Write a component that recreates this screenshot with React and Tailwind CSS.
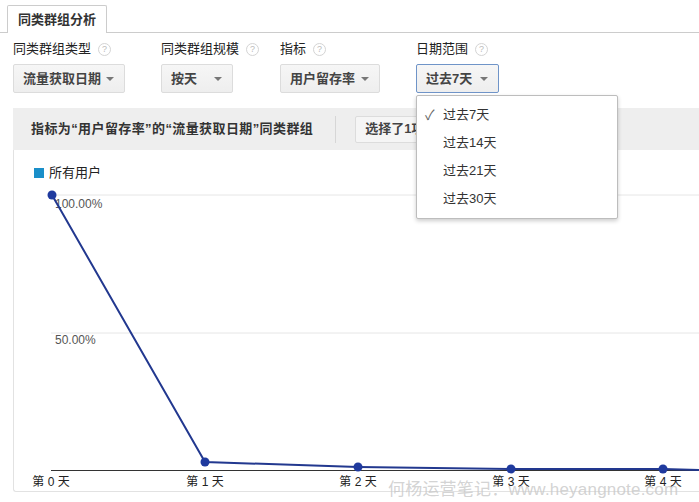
import React from "react";

const cjk = { fontFamily: '"Liberation Sans", "Noto Sans CJK SC", sans-serif' };

function Help() {
  return (
    <span className="ml-[7px] inline-flex h-[13px] w-[13px] items-center justify-center rounded-full border border-[#d4d4d4] text-[9px] leading-none text-[#bbb]">
      ?
    </span>
  );
}

function Caret() {
  return <span className="ml-auto h-0 w-0 border-x-[4px] border-t-[4px] border-x-transparent border-t-[#777]" />;
}

function Picker({ label, value, width, active }) {
  return (
    <div className="flex flex-col">
      <div className="flex h-[18px] items-center text-[13px] text-[#222]">
        {label}
        <Help />
      </div>
      <div
        className={`mt-[6px] flex h-[29px] items-center rounded-[2px] border bg-gradient-to-b from-[#f6f6f6] to-[#eeeeee] pl-[9px] pr-[10px] text-[13px] font-bold text-[#444] ${
          active ? "border-[#6f94c8]" : "border-[#dcdcdc]"
        }`}
        style={{ width }}
      >
        {value}
        <Caret />
      </div>
    </div>
  );
}

const points = [
  [38, 9],
  [191, 276],
  [344, 281],
  [497, 283],
  [649, 283],
];

const ticks = [
  [37, "第 0 天"],
  [191, "第 1 天"],
  [344, "第 2 天"],
  [497, "第 3 天"],
  [649, "第 4 天"],
];

export default function App() {
  return (
    <div className="relative h-[502px] w-[699px] overflow-hidden bg-white" style={cjk}>
      {/* tab strip */}
      <div className="flex border-b border-[#cccccc] pl-[7px] pt-[5px]">
        <div className="-mb-px flex h-[28px] items-center rounded-t-[2px] border border-b-0 border-[#cccccc] bg-white px-[10px] text-[13px] font-bold text-[#333]">
          同类群组分析
        </div>
      </div>

      {/* pickers */}
      <div className="flex pl-[13px] pt-[7px]">
        <div className="w-[148px]">
          <Picker label="同类群组类型" value="流量获取日期" width={112} />
        </div>
        <div className="w-[119px]">
          <Picker label="同类群组规模" value="按天" width={72} />
        </div>
        <div className="w-[136px]">
          <Picker label="指标" value="用户留存率" width={100} />
        </div>
        <div>
          <Picker label="日期范围" value="过去7天" width={83} active />
        </div>
      </div>

      {/* title bar */}
      <div className="ml-[13px] mt-[15px] flex h-[42px] items-center bg-[#eeeeee] pl-[18px]">
        <span className="text-[13px] font-bold tracking-[0.4px] text-[#333]">指标为“用户留存率”的“流量获取日期”同类群组</span>
        <span className="ml-[22px] h-[27px] w-px bg-[#d6d6d6]" />
        <div className="ml-[19px] flex h-[27px] items-center rounded-[2px] border border-[#dcdcdc] bg-[#f5f5f5] px-[9px] text-[13px] font-bold text-[#444]">
          选择了1项
        </div>
      </div>

      {/* chart panel */}
      <div className="ml-[13px] h-[342px] rounded-bl-[3px] border-b border-l border-[#e2e2e2]">
        <div className="flex h-[36px] items-center pl-[20px] pt-[10px] text-[13px] text-[#222]">
          <span className="mr-[5px] h-[10px] w-[10px] bg-[#1a8fc9]" />
          所有用户
        </div>
        <svg width="686" height="305" className="block" style={{ fontFamily: '"Liberation Sans", "Noto Sans CJK SC", sans-serif' }}>
          <line x1="37" y1="9" x2="686" y2="9" stroke="#e6e6e6" />
          <line x1="37" y1="147" x2="686" y2="147" stroke="#e6e6e6" />
          <text x="41" y="22" fontSize="12" fill="#555">100.00%</text>
          <text x="41" y="158" fontSize="12" fill="#555">50.00%</text>
          <line x1="37" y1="284.5" x2="686" y2="284.5" stroke="#333" />
          <polyline
            points={[...points, [686, 284]].map((p) => p.join(",")).join(" ")}
            fill="none"
            stroke="#22388f"
            strokeWidth="2"
          />
          {points.map(([x, y], i) => (
            <circle key={i} cx={x} cy={y} r="4.5" fill="#1f3a9e" />
          ))}
          {ticks.map(([x, t]) => (
            <text key={x} x={x} y="300" fontSize="12" fill="#222" textAnchor="middle">
              {t}
            </text>
          ))}
        </svg>
      </div>

      {/* watermark */}
      <div className="absolute left-[388px] top-[481px] text-[17px] leading-none tracking-[0.2px] text-[#c8c8c8]/80">
        何杨运营笔记：www.heyangnote.com
      </div>

      {/* open dropdown */}
      <div className="absolute left-[416px] top-[95px] w-[202px] rounded-[2px] border border-[#bdbdbd] bg-white py-[5px] text-[13px] text-[#333] shadow-[0_2px_4px_rgba(0,0,0,0.2)]">
        {["过去7天", "过去14天", "过去21天", "过去30天"].map((t, i) => (
          <div key={t} className="relative flex h-[28px] items-center pl-[26px]">
            {i === 0 && <span className="absolute left-[8px] text-[14px] text-[#666]">✓</span>}
            {t}
          </div>
        ))}
      </div>
    </div>
  );
}
